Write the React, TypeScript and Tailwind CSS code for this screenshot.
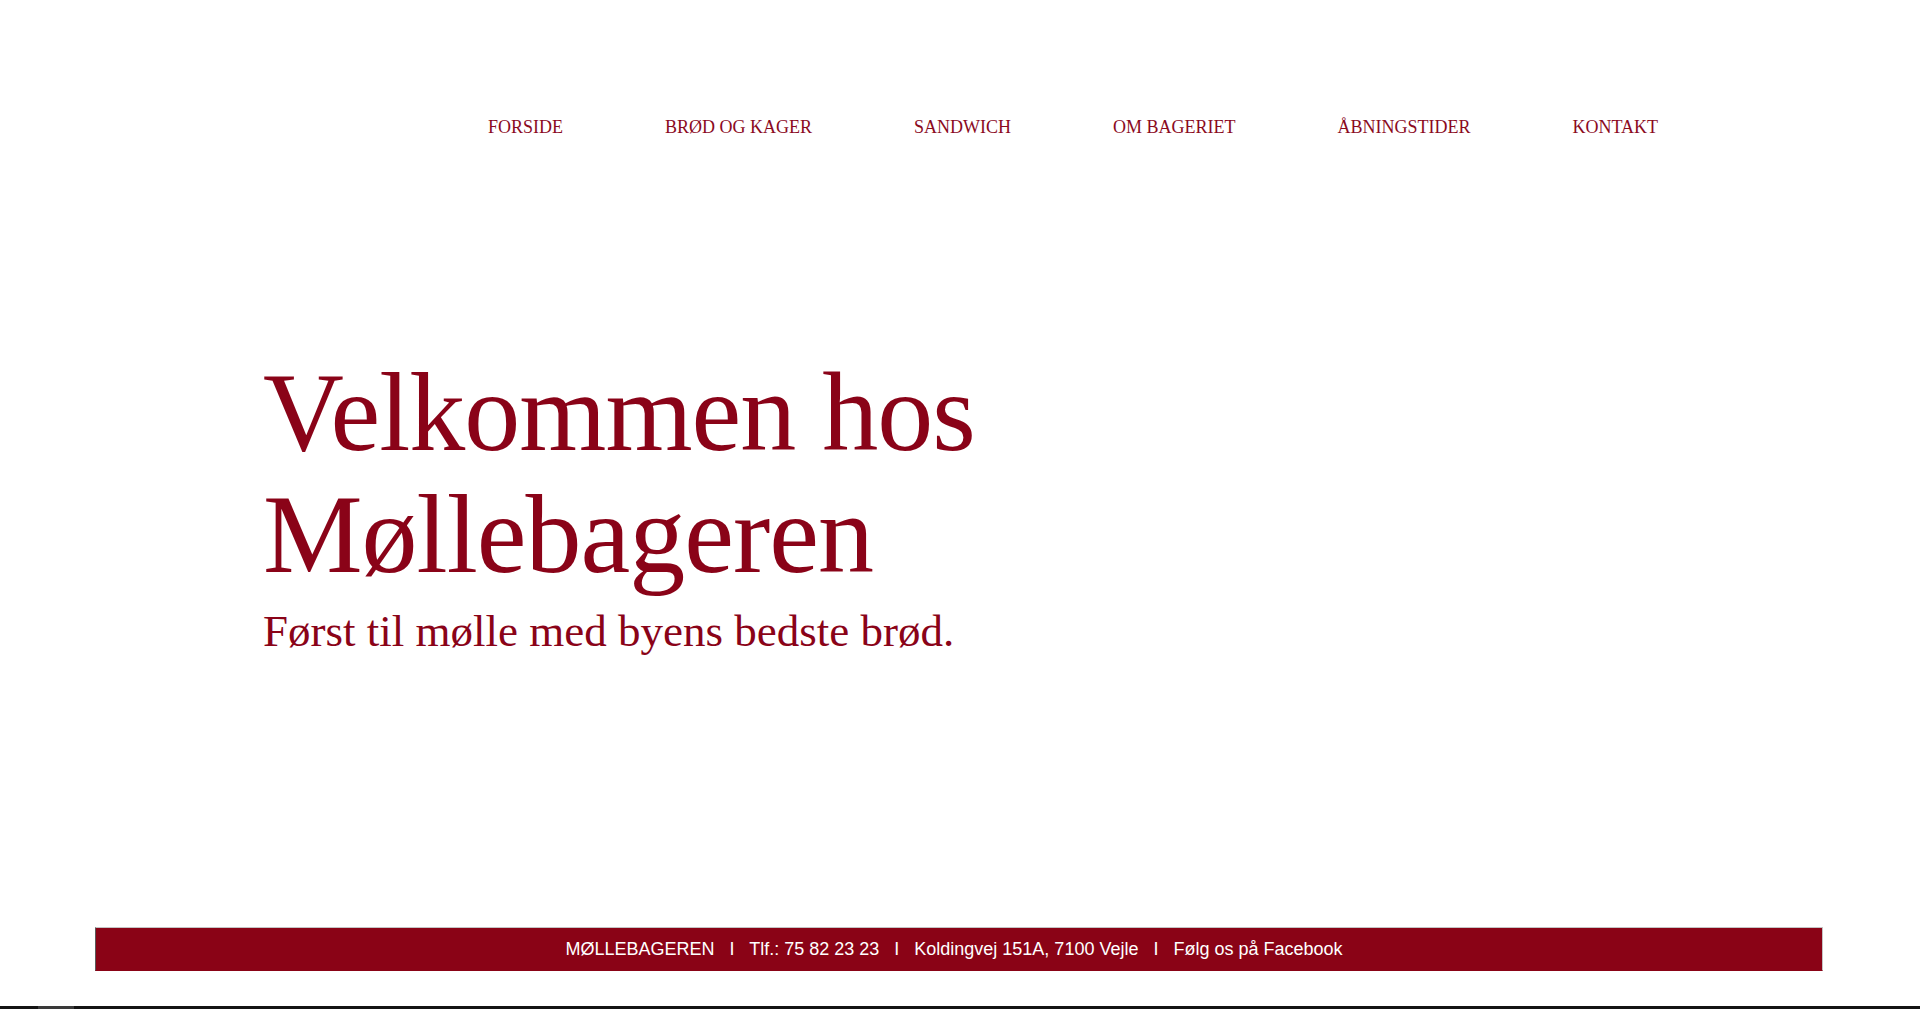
const navItems = ['FORSIDE', 'BRØD OG KAGER', 'SANDWICH', 'OM BAGERIET', 'ÅBNINGSTIDER', 'KONTAKT']

const serif = { fontFamily: '"Liberation Serif", "Times New Roman", serif' }

export default function App() {
    return (
        <div className="relative h-[1009px] w-full overflow-hidden bg-white flex flex-col" style={serif}>
            {/* topmenu */}
            <nav className="pt-[115px] pl-[488px] flex gap-[102px] text-[18px] leading-[24px] text-[#8b0a1e]">
                {navItems.map(item => (
                    <a key={item} href="#" className="whitespace-nowrap">{item}</a>
                ))}
            </nav>

            {/* velkomst */}
            <section className="pl-[263px] pt-[212px] text-[#8a0318]">
                <h1 className="text-[112px] leading-[122px] tracking-[-1px]">
                    Velkommen hos<br />Møllebageren
                </h1>
                <p className="text-[45px] leading-[56px] mt-[8px]">Først til mølle med byens bedste brød.</p>
            </section>

            <div className="flex-1" />

            {/* footer */}
            <footer className="ml-[95px] mr-[97px] h-[44px] pr-[10px] flex items-center justify-center bg-[#8a0316] border border-t-[#c4c4c4] border-r-[#c4c4c4] border-b-[#8a0316] border-l-[#5a5a5a] text-white text-[18px] whitespace-pre"
                    style={{ fontFamily: '"Liberation Sans", Arial, sans-serif' }}>
                MØLLEBAGEREN   I   Tlf.: 75 82 23 23   I   Koldingvej 151A, 7100 Vejle   I   Følg os på Facebook
            </footer>

            <div className="mt-[35px] h-[3px] bg-[#141414] flex">
                <div className="ml-[38px] w-[36px] bg-[#3a3a3a]" />
            </div>
        </div>
    )
}
